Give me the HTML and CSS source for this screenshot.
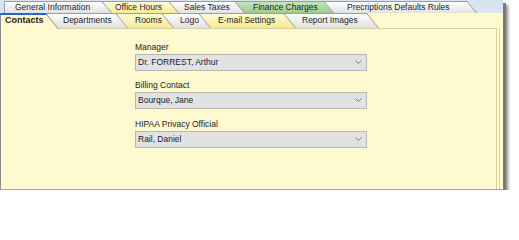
FILE: index.html
```html
<!DOCTYPE html>
<html>
<head>
<meta charset="utf-8">
<link rel="stylesheet" href="styles.css">
</head>
<body>
<div class="window">
  <div class="row1">
    <div class="tab gray t-gi">General Information</div>
    <div class="tab yellow t-oh">Office Hours</div>
    <div class="tab gray t-st">Sales Taxes</div>
    <div class="tab green t-fc">Finance Charges</div>
    <div class="tab gray t-pdr">Precriptions Defaults Rules</div>
  </div>
  <div class="panel">
    <div class="row2">
      <div class="tab active t-co">Contacts</div>
      <div class="tab gray t-de">Departments</div>
      <div class="tab yellow t-ro">Rooms</div>
      <div class="tab gray t-lo">Logo</div>
      <div class="tab yellow t-em">E-mail Settings</div>
      <div class="tab gray t-ri">Report Images</div>
    </div>
    <div class="frame-outer">
      <div class="frame">
        <div class="field">
          <div class="label">Manager</div>
          <div class="select"><span class="value">Dr. FORREST, Arthur</span><svg class="chev" width="7" height="4" viewBox="0 0 7 4"><polyline points="0.5,0.5 3.5,3.5 6.5,0.5" fill="none" stroke="#7a7a7a" stroke-width="1"/></svg></div>
        </div>
        <div class="field">
          <div class="label">Billing Contact</div>
          <div class="select"><span class="value">Bourque, Jane</span><svg class="chev" width="7" height="4" viewBox="0 0 7 4"><polyline points="0.5,0.5 3.5,3.5 6.5,0.5" fill="none" stroke="#7a7a7a" stroke-width="1"/></svg></div>
        </div>
        <div class="field field-last">
          <div class="label">HIPAA Privacy Official</div>
          <div class="select"><span class="value">Rail, Daniel</span><svg class="chev" width="7" height="4" viewBox="0 0 7 4"><polyline points="0.5,0.5 3.5,3.5 6.5,0.5" fill="none" stroke="#7a7a7a" stroke-width="1"/></svg></div>
        </div>
      </div>
    </div>
  </div>
</div>
</body>
</html>
```

FILE: styles.css
```css
html, body {
  margin: 0;
  padding: 0;
  background: #ffffff;
}

body {
  font-family: "Liberation Sans", Arial, sans-serif;
  font-size: 8.5px;
  color: #1c1c1c;
}

.window {
  position: relative;
  width: 503px;
  box-shadow: 3px 3px 0 #7a7a7a, 5px 5px 3px rgba(0, 0, 0, 0.45);
}

.row1 {
  display: flex;
  height: 14px;
  background: #d9e4f1;
  position: relative;
  z-index: 0;
}

.tab {
  position: relative;
  box-sizing: border-box;
  flex: none;
  white-space: nowrap;
  --bg: linear-gradient(#fdfdfd, #e1e1e1);
  --bd: #9c9c9c;
}

.row1 .tab {
  height: 13px;
  margin-top: 1px;
  line-height: 13px;
  margin-left: -11px;
  --s: 11px;
  --k: 40.2deg;
}

.row2 .tab {
  height: 15px;
  line-height: 15px;
  margin-left: -12px;
  --s: 12px;
  --k: 38.7deg;
}

.tab::before {
  content: "";
  position: absolute;
  z-index: -1;
  left: 0;
  top: 0;
  bottom: 0;
  right: var(--s);
  background: var(--bg);
  border-top: 1px solid var(--bd);
  border-left: 1px solid var(--bd);
}

.tab::after {
  content: "";
  position: absolute;
  z-index: -1;
  top: 0;
  bottom: 0;
  right: var(--s);
  width: calc(var(--s) + 3px);
  background: var(--bg);
  border-top: 1px solid var(--bd);
  border-right: 1px solid var(--bd);
  transform: skewX(var(--k));
  transform-origin: top;
}

.gray {
  --bg: linear-gradient(#fefefe, #e0e0e0);
}

.yellow {
  --bg: linear-gradient(#fffbd8, #f6ea92);
}

.green {
  --bg: linear-gradient(#c3e6b9, #96ca8c);
  --bd: #8aa886;
}

.active {
  --bg: #fff9d0;
  --bd: #8c8c8c;
  font-weight: bold;
  font-size: 9px;
  height: 16px !important;
}

.active::before,
.active::after {
  border-top: 2px solid #2b63c6;
}

/* row 1 tab geometry */
.t-gi { margin-left: 4px !important; width: 109px; padding-left: 11px; z-index: 6; }
.t-oh { width: 78px; padding-left: 13px; z-index: 5; }
.t-st { width: 77px; padding-left: 15px; z-index: 4; }
.t-fc { width: 100px; padding-left: 18px; z-index: 3; }
.t-pdr { width: 154px; padding-left: 23px; z-index: 2; }

/* row 2 tab geometry */
.t-co { margin-left: 0 !important; width: 58px; padding-left: 5px; z-index: 7; }
.t-de { width: 82px; padding-left: 17px; z-index: 6; }
.t-ro { width: 58px; padding-left: 19px; z-index: 5; }
.t-lo { width: 49px; padding-left: 18px; z-index: 4; }
.t-em { width: 97px; padding-left: 19px; z-index: 3; }
.t-ri { width: 95px; padding-left: 18px; z-index: 2; }

.panel {
  position: relative;
  z-index: 1;
  margin-top: -1px;
  background: #fff9d0;
  border-left: 1px solid #8c8c8c;
  border-bottom: 1px solid #a4a4a4;
  height: 176px;
}

.row2 {
  display: flex;
  height: 15px;
  margin-left: -1px;
}

.frame-outer {
  box-sizing: border-box;
  height: 161px;
  margin-right: 3px;
  padding-right: 2px;
  border-right: 1px solid #d6d0a6;
}

.frame {
  box-sizing: border-box;
  height: 100%;
  border-top: 1px solid #d6d0a6;
  border-right: 1px solid #d6d0a6;
  padding-left: 134px;
  padding-top: 13px;
}

.field + .field {
  margin-top: 9px;
}

.field.field-last {
  margin-top: 10px;
}

.label {
  line-height: 10px;
  height: 10px;
  margin-bottom: 2px;
  color: #222222;
}

.select {
  box-sizing: border-box;
  width: 232px;
  height: 17px;
  background: #e2e2e2;
  border: 1px solid #b6b6b6;
  display: flex;
  align-items: center;
  justify-content: space-between;
  padding: 0 4px 0 2px;
}

.value {
  line-height: 10px;
  margin-bottom: 2px;
  color: #1a1a1a;
}

.chev {
  display: block;
  margin-bottom: 1px;
}
```
